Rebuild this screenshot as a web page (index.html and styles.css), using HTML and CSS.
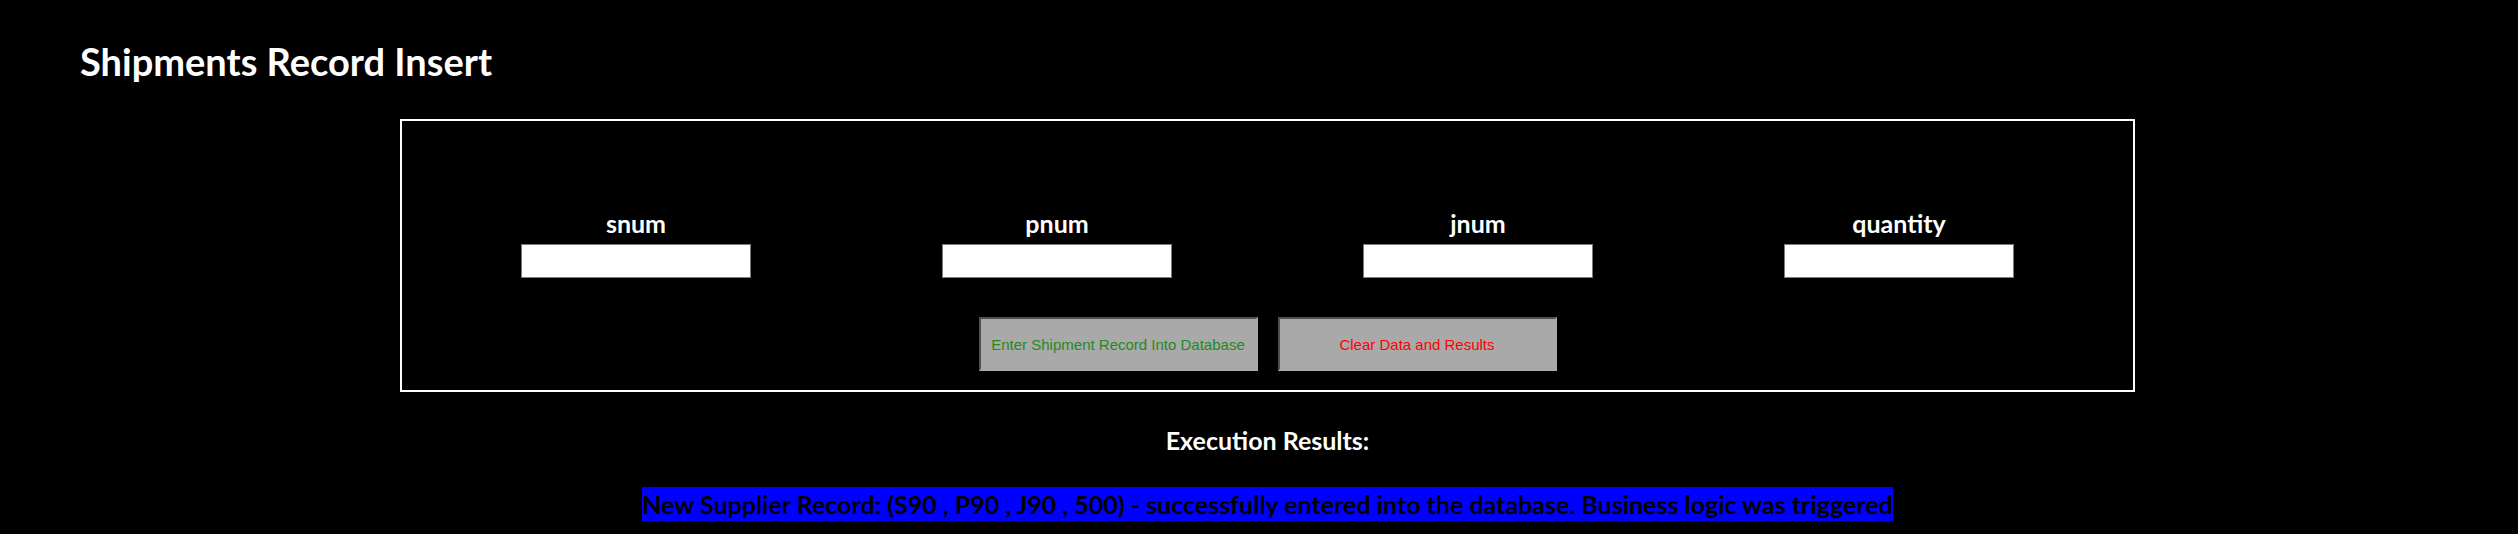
FILE: index.html
```html
<!DOCTYPE html>
<html lang="en">
<head>
  <meta charset="UTF-8" />
  <meta name="viewport" content="width=device-width, initial-scale=1.0" />
  <title>Shipments Record Insert</title>
  <link rel="stylesheet" href="styles.css">
</head>
<body>
<div class="page">
  <h1 class="page-title">Shipments Record Insert</h1>

  <form class="entry-box" onsubmit="return false;">
    <div class="fields">
      <div class="field">
        <label for="snum">snum</label>
        <input type="text" id="snum" name="snum" />
      </div>
      <div class="field">
        <label for="pnum">pnum</label>
        <input type="text" id="pnum" name="pnum" />
      </div>
      <div class="field">
        <label for="jnum">jnum</label>
        <input type="text" id="jnum" name="jnum" />
      </div>
      <div class="field">
        <label for="quantity">quantity</label>
        <input type="text" id="quantity" name="quantity" />
      </div>
    </div>
    <div class="actions">
      <button type="submit" class="btn btn-enter">Enter Shipment Record Into Database</button>
      <button type="reset" class="btn btn-clear">Clear Data and Results</button>
    </div>
  </form>

  <h3 class="results-title">Execution Results:</h3>
  <div class="results">
    <span class="result-msg">New Supplier Record: (S90 , P90 , J90 , 500) - successfully entered into the database. Business logic was triggered</span>
  </div>
</div>
</body>
</html>
```

FILE: styles.css
```css
body {
  margin: 0;
  padding: 0;
  background: black;
  color: white;
  font-family: "Lato", "Open Sans", sans-serif;
}
.page {
  padding-left: 17px;
}
.page-title {
  margin: 0;
  padding: 39px 0 0 63px;
  font-size: 38px;
  line-height: 44px;
  font-weight: 700;
}
.entry-box {
  width: 1735px;
  box-sizing: border-box;
  margin: 36px auto 0;
  padding: 87px 0 19px;
  border: 2px solid white;
}
.fields {
  display: grid;
  grid-template-columns: repeat(4, 421px);
  justify-content: center;
}
.field {
  display: flex;
  flex-direction: column;
  align-items: center;
  gap: 6px;
}
.field label {
  font-size: 25px;
  line-height: 30px;
  font-weight: 700;
}
.field input {
  width: 230px;
  height: 34px;
  box-sizing: border-box;
  border: 1px solid #7a7a7a;
  background: white;
  margin: 0;
}
.actions {
  display: flex;
  justify-content: center;
  gap: 20px;
  margin-top: 39px;
}
.btn {
  width: 279px;
  height: 54px;
  box-sizing: border-box;
  background: #a9a9a9;
  border-style: solid;
  border-width: 2px;
  border-color: #505050 #a9a9a9 #a9a9a9 #505050;
  font-family: "Liberation Sans", Arial, sans-serif;
  font-size: 15px;
  cursor: pointer;
}
.btn-enter {
  color: #228b22;
}
.btn-clear {
  color: red;
}
.results-title {
  margin: 33px 0 0;
  text-align: center;
  font-size: 25px;
  line-height: 30px;
  font-weight: 700;
}
.results {
  margin-top: 32px;
  text-align: center;
}
.result-msg {
  display: inline-block;
  background: blue;
  color: black;
  font-size: 25px;
  line-height: 34px;
  font-weight: 700;
}
```
